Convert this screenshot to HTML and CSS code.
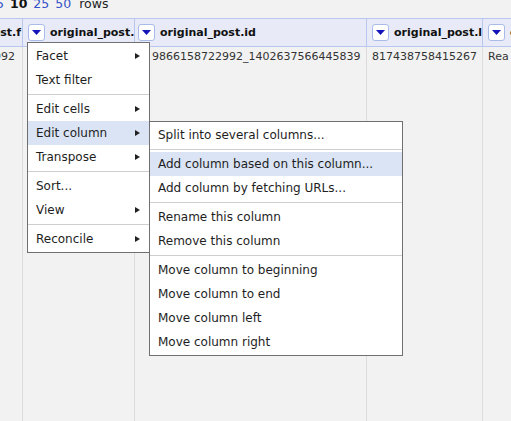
FILE: index.html
```html
<!DOCTYPE html>
<html>
<head>
<meta charset="utf-8">
<link rel="stylesheet" href="styles.css">
</head>
<body>
<div class="pager">
  <a class="link cut">5</a>
  <b class="cur">10</b>
  <a class="link">25</a>
  <a class="link">50</a>
  <span class="rows">rows</span>
</div>
<div class="grid">
  <div class="hcell first end"><span class="htext">ost.f</span></div>
  <div class="hcell"><span class="dd"><svg viewBox="0 0 9 5" width="9" height="5"><polygon points="0,0 9,0 4.5,5"/></svg></span><span class="htext">original_post.</span></div>
  <div class="hcell c3"><span class="dd"><svg viewBox="0 0 9 5" width="9" height="5"><polygon points="0,0 9,0 4.5,5"/></svg></span><span class="htext">original_post.id</span></div>
  <div class="hcell"><span class="dd"><svg viewBox="0 0 9 5" width="9" height="5"><polygon points="0,0 9,0 4.5,5"/></svg></span><span class="htext">original_post.l</span></div>
  <div class="hcell"><span class="dd"><svg viewBox="0 0 9 5" width="9" height="5"><polygon points="0,0 9,0 4.5,5"/></svg></span><span class="htext">original_post.m</span></div>

  <div class="dcell first end"><span>992</span></div>
  <div class="dcell"></div>
  <div class="dcell id"><span>9866158722992_1402637566445839</span></div>
  <div class="dcell"><span>817438758415267</span></div>
  <div class="dcell"><span>Rea</span></div>
</div>

<div class="menu menu-main">
  <div class="item sub">Facet</div>
  <div class="item">Text filter</div>
  <div class="sep"></div>
  <div class="item sub">Edit cells</div>
  <div class="item sub active">Edit column</div>
  <div class="item sub">Transpose</div>
  <div class="sep"></div>
  <div class="item">Sort...</div>
  <div class="item sub">View</div>
  <div class="sep"></div>
  <div class="item sub">Reconcile</div>
</div>

<div class="menu menu-sub">
  <div class="item">Split into several columns...</div>
  <div class="sep"></div>
  <div class="item active">Add column based on this column...</div>
  <div class="item">Add column by fetching URLs...</div>
  <div class="sep"></div>
  <div class="item">Rename this column</div>
  <div class="item">Remove this column</div>
  <div class="sep"></div>
  <div class="item">Move column to beginning</div>
  <div class="item">Move column to end</div>
  <div class="item">Move column left</div>
  <div class="item">Move column right</div>
</div>
</body>
</html>
```

FILE: styles.css
```css
* { box-sizing: border-box; }
html, body {
  margin: 0;
  padding: 0;
  height: 100%;
  overflow: hidden;
  background: #f2f2f2;
  font-family: "DejaVu Sans", "Noto Sans", sans-serif;
  color: #222;
}

.pager {
  display: flex;
  align-items: baseline;
  gap: 6px;
  height: 14px;
  margin: -3px 0 7px 0;
  font-size: 12.5px;
  line-height: 14px;
  white-space: nowrap;
}
.pager .link { color: #3552c8; }
.pager .cut { margin-left: -4px; }
.pager .cur { color: #111; font-weight: bold; }
.pager .rows { margin-left: 2px; color: #222; }

.grid {
  display: grid;
  grid-template-columns: 22px 112px 232px 116px 1fr;
  grid-template-rows: 29px 1fr;
  height: calc(100vh - 18px);
  width: 100%;
}

.hcell {
  display: flex;
  align-items: center;
  gap: 5px;
  padding: 0 0 0 5px;
  background: #e8eaf7;
  border-top: 1px solid #b7c7ef;
  border-bottom: 1px solid #b7c7ef;
  border-left: 1px solid #b7c7ef;
  overflow: hidden;
  white-space: nowrap;
}
.hcell.first { border-left: none; padding: 0 1px 0 0; }
.hcell.c3 { padding-left: 3px; }
.end { justify-content: flex-end; }
.htext {
  font-size: 11px;
  font-weight: bold;
  color: #111;
  flex: none;
}
.dd {
  flex: none;
  width: 17px;
  height: 17px;
  background: #fff;
  border: 1px solid #a9bbe9;
  border-radius: 3px;
  display: flex;
  align-items: center;
  justify-content: center;
}
.dd svg { display: block; fill: #1414b8; }

.dcell {
  display: flex;
  align-items: flex-start;
  padding: 3px 5px 0 5px;
  border-left: 1px solid #dcdcdc;
  font-size: 11px;
  line-height: 13px;
  color: #333;
  overflow: hidden;
  white-space: nowrap;
}
.dcell.first { border-left: none; padding: 3px 7px 0 0; }
.dcell.id { padding-left: 17px; }
.dcell span { flex: none; }

.menu {
  position: absolute;
  background: #fff;
  border: 1px solid #707070;
  padding: 1px 0;
  font-size: 12px;
  color: #1e1e1e;
}
.menu-main { left: 27px; top: 42px; width: 123px; }
.menu-sub { left: 149px; top: 121px; width: 254px; }

.item {
  height: 24px;
  line-height: 24px;
  padding: 0 9px 0 8px;
  display: flex;
  align-items: center;
  justify-content: space-between;
  white-space: nowrap;
}
.item.active { background: #dae4f4; }
.item.sub::after {
  content: "";
  width: 0;
  height: 0;
  border-left: 5px solid #222;
  border-top: 3.5px solid transparent;
  border-bottom: 3.5px solid transparent;
}
.sep {
  height: 1px;
  margin: 2px 0;
  background: #cfcfcf;
}
```
